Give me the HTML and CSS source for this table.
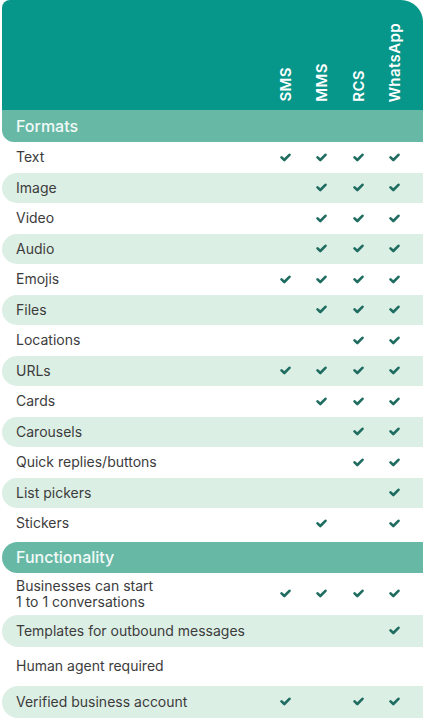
FILE: index.html
```html
<!DOCTYPE html>
<html lang="en">
<head>
<meta charset="utf-8">
<title>Messaging channel comparison</title>
<link rel="stylesheet" href="styles.css">
</head>
<body>
<svg width="0" height="0" class="defs" aria-hidden="true">
  <symbol id="ck" viewBox="0 0 12 10"><path d="M1.6 4.8 L4.7 7.8 L10.4 2" fill="none" stroke="currentColor" stroke-width="2.9" stroke-linecap="round" stroke-linejoin="round"/></symbol>
</svg>
<div class="card">
  <div class="head">
    <div class="spacer"></div>
    <div class="hcell"><span class="vlabel">SMS</span></div>
    <div class="hcell"><span class="vlabel">MMS</span></div>
    <div class="hcell"><span class="vlabel">RCS</span></div>
    <div class="hcell"><span class="vlabel">WhatsApp</span></div>
  </div>

  <div class="section first">Formats</div>
  <div class="row"><div class="label">Text</div><div class="c"><svg><use href="#ck"/></svg></div><div class="c"><svg><use href="#ck"/></svg></div><div class="c"><svg><use href="#ck"/></svg></div><div class="c"><svg><use href="#ck"/></svg></div></div>
  <div class="row band"><div class="label">Image</div><div class="c"></div><div class="c"><svg><use href="#ck"/></svg></div><div class="c"><svg><use href="#ck"/></svg></div><div class="c"><svg><use href="#ck"/></svg></div></div>
  <div class="row"><div class="label">Video</div><div class="c"></div><div class="c"><svg><use href="#ck"/></svg></div><div class="c"><svg><use href="#ck"/></svg></div><div class="c"><svg><use href="#ck"/></svg></div></div>
  <div class="row band"><div class="label">Audio</div><div class="c"></div><div class="c"><svg><use href="#ck"/></svg></div><div class="c"><svg><use href="#ck"/></svg></div><div class="c"><svg><use href="#ck"/></svg></div></div>
  <div class="row"><div class="label">Emojis</div><div class="c"><svg><use href="#ck"/></svg></div><div class="c"><svg><use href="#ck"/></svg></div><div class="c"><svg><use href="#ck"/></svg></div><div class="c"><svg><use href="#ck"/></svg></div></div>
  <div class="row band"><div class="label">Files</div><div class="c"></div><div class="c"><svg><use href="#ck"/></svg></div><div class="c"><svg><use href="#ck"/></svg></div><div class="c"><svg><use href="#ck"/></svg></div></div>
  <div class="row"><div class="label">Locations</div><div class="c"></div><div class="c"></div><div class="c"><svg><use href="#ck"/></svg></div><div class="c"><svg><use href="#ck"/></svg></div></div>
  <div class="row band"><div class="label">URLs</div><div class="c"><svg><use href="#ck"/></svg></div><div class="c"><svg><use href="#ck"/></svg></div><div class="c"><svg><use href="#ck"/></svg></div><div class="c"><svg><use href="#ck"/></svg></div></div>
  <div class="row"><div class="label">Cards</div><div class="c"></div><div class="c"><svg><use href="#ck"/></svg></div><div class="c"><svg><use href="#ck"/></svg></div><div class="c"><svg><use href="#ck"/></svg></div></div>
  <div class="row band"><div class="label">Carousels</div><div class="c"></div><div class="c"></div><div class="c"><svg><use href="#ck"/></svg></div><div class="c"><svg><use href="#ck"/></svg></div></div>
  <div class="row"><div class="label">Quick replies/buttons</div><div class="c"></div><div class="c"></div><div class="c"><svg><use href="#ck"/></svg></div><div class="c"><svg><use href="#ck"/></svg></div></div>
  <div class="row band"><div class="label">List pickers</div><div class="c"></div><div class="c"></div><div class="c"></div><div class="c"><svg><use href="#ck"/></svg></div></div>
  <div class="row"><div class="label">Stickers</div><div class="c"></div><div class="c"><svg><use href="#ck"/></svg></div><div class="c"></div><div class="c"><svg><use href="#ck"/></svg></div></div>

  <div class="section second">Functionality</div>
  <div class="row tall2"><div class="label">Businesses can start<br>1 to 1 conversations</div><div class="c"><svg><use href="#ck"/></svg></div><div class="c"><svg><use href="#ck"/></svg></div><div class="c"><svg><use href="#ck"/></svg></div><div class="c"><svg><use href="#ck"/></svg></div></div>
  <div class="row band f"><div class="label">Templates for outbound messages</div><div class="c"></div><div class="c"></div><div class="c"></div><div class="c"><svg><use href="#ck"/></svg></div></div>
  <div class="row tall"><div class="label">Human agent required</div><div class="c"></div><div class="c"></div><div class="c"></div><div class="c"></div></div>
  <div class="row band f"><div class="label">Verified business account</div><div class="c"><svg><use href="#ck"/></svg></div><div class="c"></div><div class="c"><svg><use href="#ck"/></svg></div><div class="c"><svg><use href="#ck"/></svg></div></div>
</div>
</body>
</html>
```

FILE: styles.css
```css
html, body {
  margin: 0;
  padding: 0;
  background: #ffffff;
}
body {
  font-family: Inter, "Liberation Sans", sans-serif;
  color: #3c3c3c;
}
.defs {
  position: absolute;
  width: 0;
  height: 0;
  overflow: hidden;
}
.card {
  width: 421px;
  margin-left: 2px;
  background: #ffffff;
  display: flex;
  flex-direction: column;
}
.head {
  height: 110px;
  background: #06968a;
  border-radius: 8px 22px 0 0;
  display: flex;
  padding-right: 10px;
  box-sizing: border-box;
}
.spacer {
  flex: 1;
}
.hcell {
  width: 36.5px;
  display: flex;
  justify-content: center;
  align-items: flex-end;
  padding-bottom: 8px;
}
.vlabel {
  writing-mode: vertical-rl;
  transform: rotate(180deg);
  color: #ffffff;
  font-size: 15px;
  font-weight: 600;
  letter-spacing: 0.4px;
  line-height: 1;
}
.section {
  background: #67b9a6;
  color: #f2faf7;
  font-size: 16px;
  font-weight: 500;
  display: flex;
  align-items: center;
  padding-left: 14px;
}
.section.first {
  height: 32px;
  border-radius: 0 0 0 12px;
}
.section.second {
  height: 31px;
  margin-top: 3px;
  border-radius: 16px 0 0 16px;
}
.row {
  height: 30.5px;
  display: flex;
  align-items: center;
  padding-right: 10px;
}
.row.band {
  background: #dcefe5;
  border-radius: 15px 0 0 15px;
}
.row.f {
  height: 32px;
  border-radius: 16px 0 0 16px;
}
.row.tall2 {
  height: 42px;
}
.row.tall {
  height: 39px;
}
.label {
  flex: 1;
  padding-left: 14px;
  font-size: 14px;
  line-height: 16px;
}
.c {
  width: 36.5px;
  height: 12px;
  display: flex;
  justify-content: center;
  align-items: center;
}
.c svg {
  width: 11px;
  height: 9px;
  color: #1f6c60;
}
```
